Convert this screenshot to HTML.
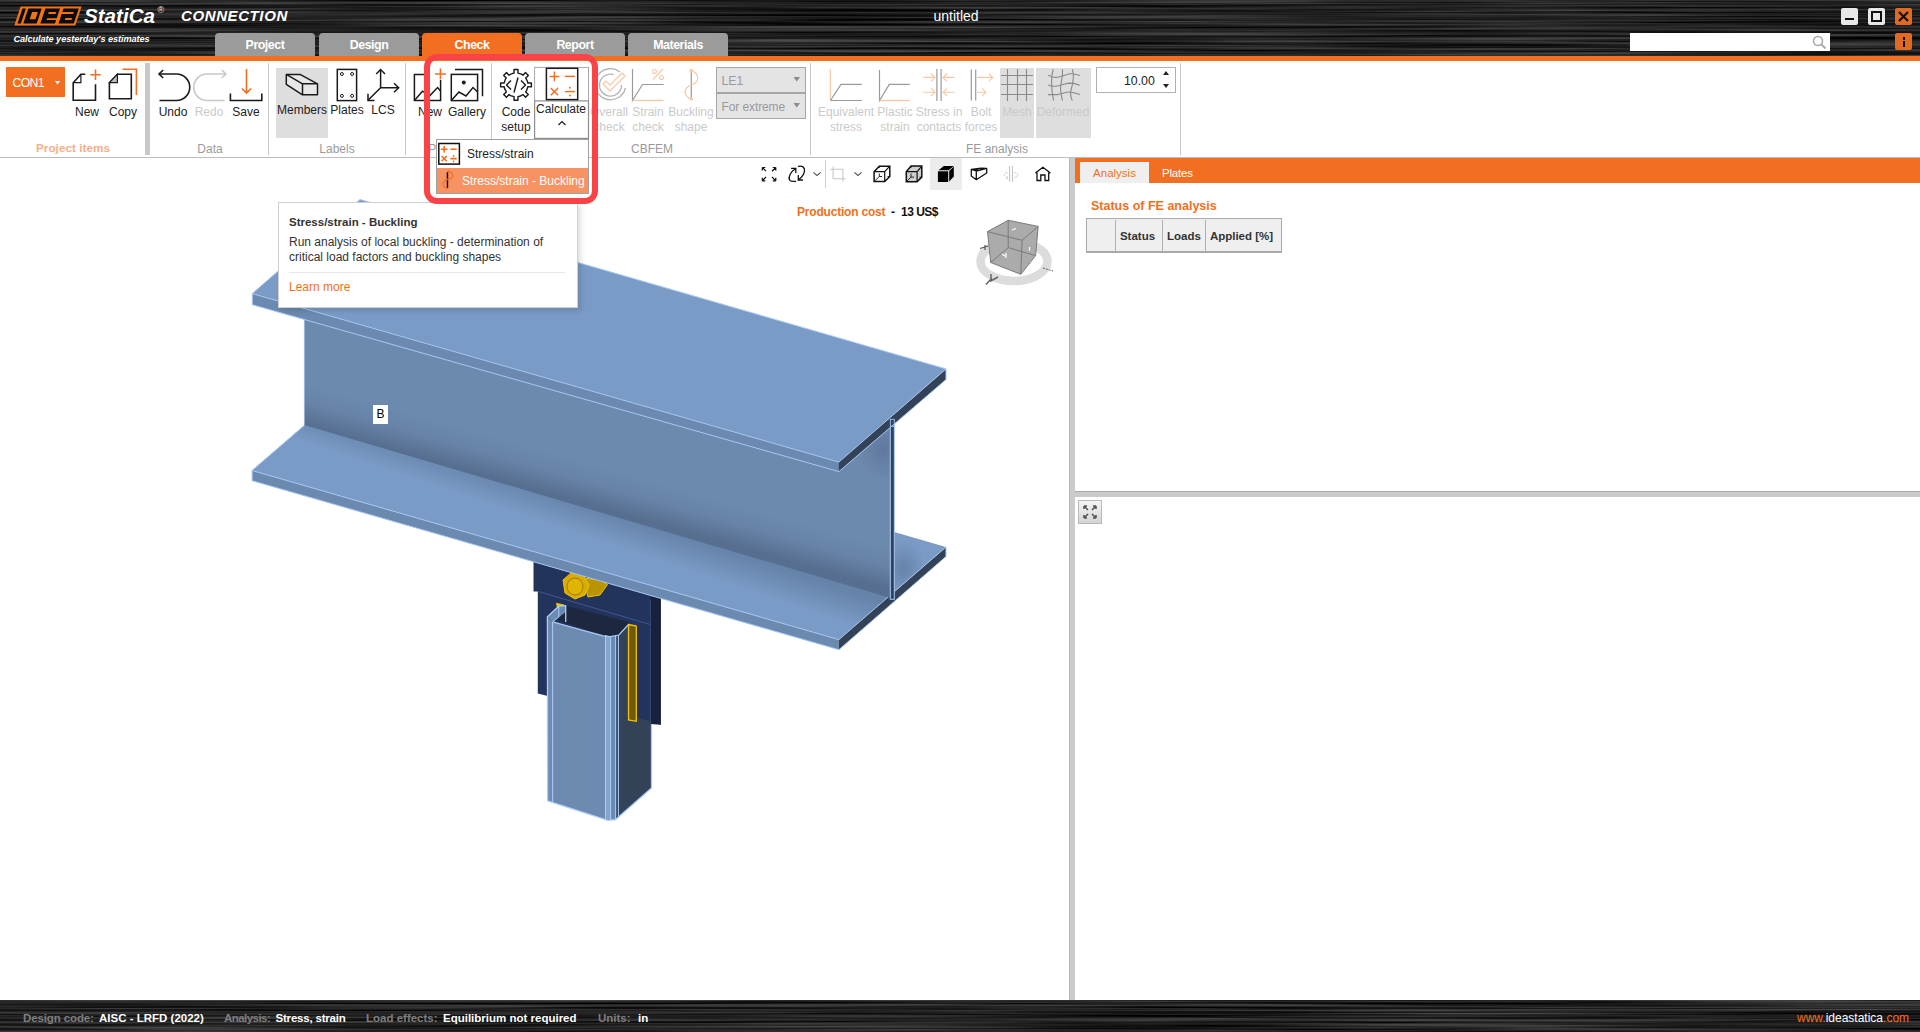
<!DOCTYPE html>
<html><head><meta charset="utf-8">
<style>
*{margin:0;padding:0;box-sizing:border-box}
html,body{width:1920px;height:1032px;overflow:hidden;background:#fff;font-family:"Liberation Sans",sans-serif;color:#222}
.a{position:absolute}
#hdr{left:0;top:0;width:1920px;height:56px;background:#222}
#obar{left:0;top:56px;width:1920px;height:5px;background:#f26f22}
#ribbon{left:0;top:61px;width:1920px;height:97px;background:#fff;border-bottom:1px solid #bdbdbd}
.tab{top:33px;height:23px;line-height:23px!important;padding-top:1px;width:100px;background:#9b9b9b;border-radius:4px 4px 0 0;color:#fff;font-weight:bold;font-size:12.4px;letter-spacing:-0.45px;text-align:center;line-height:23px}
.sep{width:1px;background:#c8c8c8}
.lbl{font-size:12px;color:#222;text-align:center;line-height:15px;white-space:nowrap}
.dis{color:#cacaca}
.grp{font-size:12px;color:#9a9a9a;text-align:center;top:141.5px;line-height:15px}
#footer{left:0;top:1000px;width:1920px;height:32px;background:#222}
.ft{top:1011px;font-size:12.5px;line-height:15px;white-space:nowrap}
.fb{font-size:11.5px!important;top:1011px!important}
</style></head><body>
<div id="hdr" class="a"></div>
<svg class="a" style="left:0;top:0" width="1920" height="56"><filter id="brush" x="0" y="0" width="100%" height="100%" color-interpolation-filters="sRGB"><feTurbulence type="fractalNoise" baseFrequency="0.003 0.42" numOctaves="3" seed="11"/><feColorMatrix type="matrix" values="0.45 0 0 0 -0.09  0.45 0 0 0 -0.09  0.45 0 0 0 -0.09  0 0 0 0 1"/></filter><rect width="1920" height="56" filter="url(#brush)"/></svg>
<div id="obar" class="a"></div>
<div id="ribbon" class="a"></div>
<div id="footer" class="a"></div>
<svg class="a" style="left:0;top:1000px" width="1920" height="32"><filter id="brush2" x="0" y="0" width="100%" height="100%" color-interpolation-filters="sRGB"><feTurbulence type="fractalNoise" baseFrequency="0.003 0.42" numOctaves="3" seed="5"/><feColorMatrix type="matrix" values="0.45 0 0 0 -0.09  0.45 0 0 0 -0.09  0.45 0 0 0 -0.09  0 0 0 0 1"/></filter><rect width="1920" height="32" filter="url(#brush2)"/></svg>


<!-- RIBBON CONTENT -->
<div class="a" style="left:145px;top:63px;width:5px;height:92px;background:#c8c8c8"></div>
<div class="a sep" style="left:268px;top:63px;height:92px"></div>
<div class="a sep" style="left:405px;top:63px;height:92px"></div>
<div class="a sep" style="left:491px;top:63px;height:92px"></div>
<div class="a sep" style="left:810px;top:63px;height:92px"></div>
<div class="a sep" style="left:1180px;top:63px;height:92px"></div>
<!-- highlights -->
<div class="a" style="left:276px;top:68px;width:52px;height:70px;background:#dedede"></div>
<div class="a" style="left:1000px;top:68px;width:34px;height:70px;background:#dedede"></div>
<div class="a" style="left:1036px;top:68px;width:55px;height:70px;background:#dedede"></div>
<!-- CON1 -->
<div class="a" style="left:6px;top:67px;width:59px;height:30px;background:#f26f22"></div><div class="a" style="left:12.5px;top:76px;color:#fff;font-size:12.2px;line-height:15px;letter-spacing:-0.6px">CON1</div>
<svg class="a" style="left:55px;top:81px" width="6" height="4"><polygon points="0,0 5,0 2.5,3.5" fill="#fff"/></svg>

<svg class="a" style="left:0;top:0" width="1200" height="160" viewBox="0 0 1200 160" fill="none" stroke-linecap="butt">
<g stroke="#1a1a1a" stroke-width="1.6">
 <!-- New doc -->
 <path d="M85.3,74.2 H80.9 L73.2,82.7 V100.2 H95.5 V84.2"/>
 <path d="M73.2,82.7 H80.9 V74.2" stroke-width="1.2"/>
 <!-- Copy doc -->
 <path d="M117.4,74.2 H131.3 V98.8 H109.4 V82.7 Z"/>
 <path d="M109.4,82.7 H117.4 V74.2 Z" fill="#bbb" stroke-width="1.2"/>
 <!-- Undo -->
 <path d="M159.5,74 H176.5 A13.25,13.25 0 0 1 176.5,100.5 H159.5"/>
 <path d="M163.2,70 L159,74 L163.2,78"/>
 <!-- Save tray -->
 <path d="M230.4,93.5 V100.5 H261.8 V93.5"/>
</g>
<g stroke="#f26f22" stroke-width="1.6">
 <path d="M95.5,69.5 V80 M90.2,74.7 H100.8"/>
 <path d="M122.5,69.3 H136.4 V95.1"/>
 <path d="M246.5,68.9 V93 M242,88.5 L246.5,93 L251,88.5"/>
</g>
<g stroke="#c8c8c8" stroke-width="1.6">
 <path d="M225.5,74 H207 A13.25,13.25 0 0 0 207,100.5 H224.5"/>
 <path d="M221.8,70 L226,74 L221.8,78"/>
</g>
<!-- Members box -->
<g stroke="#1a1a1a" stroke-width="1.5" stroke-linejoin="round">
 <path d="M286.3,74.4 L300,74.4 L317.5,83.8 L317.5,94.8 L302.5,94.8 L286.3,84.4 Z" fill="#e8e8e8"/>
 <path d="M286.3,74.4 L302.5,83.8 L317.5,83.8 M302.5,83.8 V94.8"/>
</g>
<!-- Plates -->
<g stroke="#1a1a1a" stroke-width="1.5">
 <rect x="337.3" y="69.4" width="19.3" height="31.2"/>
 <circle cx="341.9" cy="74" r="1.5" stroke-width="1"/><circle cx="352.1" cy="74" r="1.5" stroke-width="1"/>
 <circle cx="341.9" cy="95.9" r="1.5" stroke-width="1"/><circle cx="352.1" cy="95.9" r="1.5" stroke-width="1"/>
</g>
<!-- LCS -->
<g stroke="#1a1a1a" stroke-width="1.5">
 <path d="M380.6,70 V87.8 H398.5 M380.6,87.8 L368,100.3"/>
 <path d="M376.2,74 L380.6,69.5 L385,74"/>
 <path d="M394,83.3 L398.7,87.8 L394,92.3"/>
 <path d="M368,93.8 V100.4 H374.5"/>
</g>
<!-- New picture -->
<g stroke="#1a1a1a" stroke-width="1.5">
 <path d="M430,74.4 H414.4 V100.6 H440.6 V80"/>
 <path d="M414.4,100.6 L422.5,91.2 L430,95.6 L437.5,87.5 L440.6,91"/>
</g>
<path d="M440.4,68.5 V79.5 M435,74 H446" stroke="#f26f22" stroke-width="1.5"/>
<!-- Gallery -->
<g stroke="#1a1a1a" stroke-width="1.5">
 <path d="M455,69.4 H482.5 V96.3"/>
 <rect x="451.3" y="74.4" width="26.3" height="26.2"/>
 <path d="M451.3,100.6 L459,92 L466,96 L473,87.5 L477.6,92"/>
</g>
<circle cx="463.8" cy="82.5" r="2" fill="#1a1a1a"/>
<!-- Code setup gear -->
<g stroke="#1a1a1a" stroke-width="1.4" stroke-linejoin="round">
 <path d="M527.4,81.2 L527.8,83.0 L531.4,82.9 L531.4,86.9 L527.8,86.8 L526.7,90.4 L525.7,91.9 L528.3,94.4 L525.5,97.2 L523.0,94.6 L519.7,96.3 L517.9,96.7 L518.0,100.3 L514.0,100.3 L514.1,96.7 L510.5,95.6 L509.0,94.6 L506.5,97.2 L503.7,94.4 L506.3,91.9 L504.6,88.6 L504.2,86.8 L500.6,86.9 L500.6,82.9 L504.2,83.0 L505.3,79.4 L506.3,77.9 L503.7,75.4 L506.5,72.6 L509.0,75.2 L512.3,73.5 L514.1,73.1 L514.0,69.5 L518.0,69.5 L517.9,73.1 L521.5,74.2 L523.0,75.2 L525.5,72.6 L528.3,75.4 L525.7,77.9 Z"/>
 <path d="M511,80.5 L506.5,85 L511,89.5 M521,80.5 L525.5,85 L521,89.5 M518,77.5 L514,92.5"/>
</g>
<!-- Calculate -->
<rect x="534.6" y="67.4" width="53.9" height="71" stroke="#a8a8a8" stroke-width="1" fill="#fff"/>
<rect x="534.6" y="100.9" width="53.9" height="37.5" stroke="#8e8e8e" stroke-width="1.2" fill="#fff"/>
<rect x="546.4" y="68.3" width="31.3" height="31.3" stroke="#1a1a1a" stroke-width="1.5"/>
<g stroke="#f26f22" stroke-width="1.5">
 <path d="M554.4,71.5 V81.3 M549.5,76.4 H559.3"/>
 <path d="M565,76.4 H574.8"/>
 <path d="M550.8,88 L558,95.2 M558,88 L550.8,95.2"/>
 <path d="M565,91.6 H574.8"/>
</g>
<circle cx="569.9" cy="87.8" r="1" fill="#f26f22"/><circle cx="569.9" cy="95.4" r="1" fill="#f26f22"/>
<path d="M558.5,125 L562,121.5 L565.5,125" stroke="#1a1a1a" stroke-width="1.2"/>
<!-- Overall check -->
<g stroke="#b4b4b4" stroke-width="1.3">
 <path d="M620,72 A15.5,15.5 0 1 0 625.5,88"/>
 <path d="M613.5,74.5 A11,11 0 1 0 621.5,85"/>
</g>
<path d="M603,84 L610,91 L625,76 L622,73 L610,85 L606,81 Z" stroke="#f8c8a8" stroke-width="1.2" stroke-linejoin="round"/>
<!-- Strain check -->
<path d="M632.5,69 V100.5 L642.5,84.5 H663.6" stroke="#9a9a9a" stroke-width="1.2"/>
<path d="M632.5,100.5 H663.6" stroke="#f8c8a8" stroke-width="1.4"/>
<path d="M653,79.5 L663,69" stroke="#f8c8a8" stroke-width="1.2"/>
<circle cx="654.5" cy="71.5" r="2" stroke="#f8c8a8" stroke-width="1.1"/><circle cx="661.5" cy="77.5" r="2" stroke="#f8c8a8" stroke-width="1.1"/>
<!-- Buckling shape -->
<path d="M691.3,70.6 V99" stroke="#9a9a9a" stroke-width="1.2"/>
<path d="M691.3,70.6 C700,74 700,82 691.3,85 C683,88 683,96 691.3,99" stroke="#f8c8a8" stroke-width="1.2"/>
<circle cx="691.3" cy="70.6" r="1.8" fill="#f8c8a8"/><circle cx="691.3" cy="99" r="1.8" fill="#f8c8a8"/>
<!-- Equivalent stress -->
<path d="M830.4,69.3 V100.5" stroke="#f8c8a8" stroke-width="1.2"/>
<path d="M830.4,100.5 H861.8 M830.4,100.5 L841,84.4 H861.8" stroke="#9a9a9a" stroke-width="1.2"/>
<!-- Plastic strain -->
<path d="M879.5,69.9 V100.5 L889.3,84.4 H909.7" stroke="#9a9a9a" stroke-width="1.2"/>
<path d="M879.5,100.5 H909.7" stroke="#f8c8a8" stroke-width="1.4"/>
<!-- Stress in contacts -->
<path d="M936.9,69 V101 M941.1,69 V101" stroke="#9a9a9a" stroke-width="1.2"/>
<path d="M923.3,77.4 H935 M931,73.5 L935,77.4 L931,81.3 M923.3,92.2 H935 M931,88.3 L935,92.2 L931,96.1 M954.7,77.4 H943 M947,73.5 L943,77.4 L947,81.3 M954.7,92.2 H943 M947,88.3 L943,92.2 L947,96.1" stroke="#f8c8a8" stroke-width="1.1"/>
<!-- Bolt forces -->
<path d="M971.3,69.5 V100.5 M975.7,69.5 V100.5" stroke="#9a9a9a" stroke-width="1.2"/>
<path d="M977,77.4 H992.8 M988.8,73.5 L992.8,77.4 L988.8,81.3 M977,92.2 H986 M982,88.3 L986,92.2 L982,96.1" stroke="#f8c8a8" stroke-width="1.1"/>
<!-- Mesh -->
<path d="M1007.5,69 V101 M1017.5,69 V101 M1026.5,69 V101 M1001,75.5 H1033 M1001,84.5 H1033 M1001,94.5 H1033" stroke="#8a8a8a" stroke-width="1.1"/>
<!-- Deformed -->
<path d="M1053.3,69.3 C1051,76 1051,90 1053.6,100.5 M1062.4,69.3 C1063.5,76 1060,84 1060.6,90 C1061,95 1062,98 1062.4,100.5 M1072.3,69.3 C1074,74 1073.5,82 1071,90 C1070,95 1071,98 1072.3,100.5 M1048.1,75.3 C1051,77 1054,77.5 1057,77.3 C1062,76.8 1066,74 1070.5,73.7 C1074,73.6 1077,74.5 1079.9,75.5 M1048.1,84.9 C1051,86 1054,86.3 1056,86.2 C1062,85.5 1066,83.2 1069.5,83.1 C1074,83.2 1077,84.2 1079.9,85.2 M1048.1,94.6 H1057.5 C1062,93.8 1066,92 1069,92 C1073,92 1077,93.5 1079.9,94.6" stroke="#8a8a8a" stroke-width="1.1"/>
</svg>

<!-- combos -->
<div class="a" style="left:716px;top:67px;width:90px;height:26px;background:#e4e4e4;border:1px solid #a6a6a6"></div>
<div class="a" style="left:716px;top:93px;width:90px;height:26px;background:#e4e4e4;border:1px solid #a6a6a6"></div>
<div class="a" style="left:721.5px;top:73.5px;color:#9a9a9a;font-size:12.3px;line-height:15px">LE1</div>
<div class="a" style="left:721.5px;top:99.5px;color:#9a9a9a;font-size:12px;line-height:15px;letter-spacing:-0.1px">For extreme</div>
<svg class="a" style="left:793px;top:77px" width="8" height="5"><polygon points="0.5,0 7,0 3.75,4.5" fill="#8a8a8a"/></svg>
<svg class="a" style="left:793px;top:103px" width="8" height="5"><polygon points="0.5,0 7,0 3.75,4.5" fill="#8a8a8a"/></svg>
<!-- spin -->
<div class="a" style="left:1096px;top:67px;width:80px;height:26px;background:#fff;border:1px solid #b0b0b0"></div>
<div class="a" style="left:1124px;top:73.5px;color:#222;font-size:12.3px;line-height:15px">10.00</div>
<svg class="a" style="left:1163px;top:70px" width="8" height="20"><polygon points="0,5 6,5 3,1" fill="#222"/><polygon points="0,14 6,14 3,18" fill="#222"/></svg>

<!-- labels -->
<div class="a lbl" style="left:67px;top:104.5px;width:40px">New</div>
<div class="a lbl" style="left:103px;top:104.5px;width:40px">Copy</div>
<div class="a lbl" style="left:153px;top:104.5px;width:40px">Undo</div>
<div class="a lbl dis" style="left:189px;top:104.5px;width:40px">Redo</div>
<div class="a lbl" style="left:226px;top:104.5px;width:40px">Save</div>
<div class="a lbl" style="left:272px;top:102.5px;width:60px">Members</div>
<div class="a lbl" style="left:322px;top:102.5px;width:50px">Plates</div>
<div class="a lbl" style="left:363px;top:102.5px;width:40px">LCS</div>
<div class="a lbl" style="left:410px;top:104.5px;width:40px">New</div>
<div class="a lbl" style="left:442px;top:104.5px;width:50px">Gallery</div>
<div class="a lbl" style="left:491px;top:104.5px;width:50px">Code<br>setup</div>
<div class="a lbl" style="left:531px;top:101.5px;width:60px">Calculate</div>
<div class="a lbl dis" style="left:579px;top:104.5px;width:60px">Overall<br>check</div>
<div class="a lbl dis" style="left:623px;top:104.5px;width:50px">Strain<br>check</div>
<div class="a lbl dis" style="left:661px;top:104.5px;width:60px">Buckling<br>shape</div>
<div class="a lbl dis" style="left:816px;top:104.5px;width:60px">Equivalent<br>stress</div>
<div class="a lbl dis" style="left:870px;top:104.5px;width:50px">Plastic<br>strain</div>
<div class="a lbl dis" style="left:909px;top:104.5px;width:60px">Stress in<br>contacts</div>
<div class="a lbl dis" style="left:956px;top:104.5px;width:50px">Bolt<br>forces</div>
<div class="a lbl dis" style="left:992px;top:104.5px;width:50px">Mesh</div>
<div class="a lbl dis" style="left:1033px;top:104.5px;width:60px">Deformed</div>
<!-- group labels -->
<div class="a grp" style="left:23px;width:100px;color:#f5ae88;font-weight:bold;font-size:11.8px;top:140.5px">Project items</div>
<div class="a grp" style="left:180px;width:60px">Data</div>
<div class="a grp" style="left:307px;width:60px">Labels</div>
<div class="a grp" style="left:410px;width:80px">Pictures</div>
<div class="a grp" style="left:612px;width:80px">CBFEM</div>
<div class="a grp" style="left:947px;width:100px">FE analysis</div>


<!-- LOGO -->
<svg class="a" style="left:10px;top:3px" width="80" height="26" viewBox="10 3 80 26">
 <path d="M20.60,6.50 H81.60 L75.33,25.50 H14.33 Z" fill="#f27314"/>
 <path d="M22.50,8.40 H25.90 L20.88,23.60 H17.48 Z M28.30,8.40 H41.70 L36.68,23.60 H23.28 Z M32.10,12.00 H37.90 L35.51,19.25 H29.71 Z M45.40,8.40 H60.00 L54.98,23.60 H40.38 Z M63.50,8.40 H78.80 L73.78,23.60 H58.48 Z" fill="#0a0a0a" fill-rule="evenodd"/>
 <path d="M48.75,12.00 H56.25 L55.62,13.90 H48.12 Z M47.10,18.30 H60.50 L59.94,20.00 H46.54 Z M62.00,12.00 H73.75 L73.12,13.90 H61.37 Z M65.40,18.10 H72.10 L71.47,20.00 H64.77 Z" fill="#f27314"/>
</svg>
<div class="a" style="left:84px;top:4px;color:#fff;font-size:20.6px;font-weight:bold;font-style:italic;line-height:24px;letter-spacing:0px">StatiCa</div>
<div class="a" style="left:157.5px;top:5px;color:#eee;font-size:9px;line-height:10px">&#174;</div>
<div class="a" style="left:181px;top:6px;color:#fff;font-size:15px;font-weight:bold;font-style:italic;line-height:20px;letter-spacing:0.6px">CONNECTION</div>
<div class="a" style="left:13.5px;top:33px;color:#fff;font-size:9.2px;font-weight:bold;font-style:italic;line-height:12px;letter-spacing:-0.08px;white-space:nowrap">Calculate yesterday's estimates</div>

<!-- window controls -->
<div class="a" style="left:1841px;top:8px;width:17px;height:17px;background:#e8e8e8;border-radius:2px"></div>
<div class="a" style="left:1845px;top:18px;width:9px;height:2px;background:#111"></div>
<div class="a" style="left:1868px;top:8px;width:17px;height:17px;background:#e8e8e8;border-radius:2px"></div>
<div class="a" style="left:1871px;top:11px;width:11px;height:11px;border:2px solid #111"></div>
<div class="a" style="left:1895px;top:8px;width:17px;height:17px;background:#e06a22;border-radius:2px"></div>
<svg class="a" style="left:1895px;top:8px" width="17" height="17"><path d="M4,4 L13,13 M13,4 L4,13" stroke="#111" stroke-width="2.2"/></svg>
<div class="a" style="left:1895px;top:33px;width:17px;height:17px;background:#e06a22;border-radius:2px"></div>
<div class="a" style="left:1902.5px;top:37px;width:2.5px;height:2.5px;background:#111"></div>
<div class="a" style="left:1902.5px;top:41px;width:2.5px;height:6px;background:#111"></div>
<!-- search -->
<div class="a" style="left:1630px;top:33px;width:200px;height:18px;background:#fff"></div>
<svg class="a" style="left:1810px;top:33px" width="20" height="18"><circle cx="8" cy="8" r="4.5" fill="none" stroke="#aaa" stroke-width="1.6"/><path d="M11.5,11.5 L15.5,15.5" stroke="#aaa" stroke-width="2"/></svg>

<!-- FOOTER TEXT -->
<div class="a ft fb" style="left:23px;color:#7e7e7e;font-weight:bold;letter-spacing:-0.12px">Design code:</div>
<div class="a ft fb" style="left:99px;color:#fff;font-weight:bold">AISC - LRFD (2022)</div>
<div class="a ft fb" style="left:224px;color:#7e7e7e;font-weight:bold;letter-spacing:-0.55px">Analysis:</div>
<div class="a ft fb" style="left:275.5px;color:#fff;font-weight:bold;letter-spacing:-0.2px">Stress, strain</div>
<div class="a ft fb" style="left:366px;color:#7e7e7e;font-weight:bold">Load effects:</div>
<div class="a ft fb" style="left:443px;color:#fff;font-weight:bold">Equilibrium not required</div>
<div class="a ft fb" style="left:598px;color:#7e7e7e;font-weight:bold">Units:</div>
<div class="a ft fb" style="left:638px;color:#fff;font-weight:bold">in</div>
<div class="a ft" style="left:1797px;color:#fff;font-size:12px"><span style="color:#f26f22">www.</span>ideastatica<span style="color:#f26f22">.com</span></div>

<!-- RIGHT PANEL -->
<div class="a" style="left:1091px;top:199px;color:#f26f22;font-size:12.5px;font-weight:bold;line-height:15px">Status of FE analysis</div>
<div class="a" style="left:1086px;top:218px;width:196px;height:35px;background:#efefef;border:solid #a9a9a9;border-width:1.5px 1.5px 2.5px 1.5px"></div>
<div class="a" style="left:1115px;top:220px;width:1px;height:31px;background:#b0b0b0"></div>
<div class="a" style="left:1162px;top:220px;width:1px;height:31px;background:#b0b0b0"></div>
<div class="a" style="left:1205px;top:220px;width:1px;height:31px;background:#b0b0b0"></div>
<div class="a" style="left:1114.5px;top:229px;width:46px;text-align:center;font-size:11.5px;font-weight:bold;color:#333;line-height:15px">Status</div>
<div class="a" style="left:1163px;top:229px;width:42px;text-align:center;font-size:11.5px;font-weight:bold;color:#333;line-height:15px">Loads</div>
<div class="a" style="left:1204.5px;top:229px;width:74px;text-align:center;font-size:11.5px;font-weight:bold;color:#333;line-height:15px">Applied [%]</div>
<!-- expand button -->
<div class="a" style="left:1078px;top:500px;width:24px;height:24px;border:1px solid #b8b8b8;background:linear-gradient(#f4f4f4,#d4d4d4)"></div>
<svg class="a" style="left:1078px;top:500px" width="24" height="24"><g stroke="#555" stroke-width="1.6" fill="none"><path d="M6,6 L10,10 M6,6 H9 M6,6 V9"/><path d="M18,6 L14,10 M18,6 H15 M18,6 V9"/><path d="M6,18 L10,14 M6,18 H9 M6,18 V15"/><path d="M18,18 L14,14 M18,18 H15 M18,18 V15"/></g></svg>

<!-- VIEWPORT TOOLBAR -->
<div class="a" style="left:930px;top:158px;width:32px;height:32px;background:#ececec"></div>
<div class="a" style="left:825px;top:160px;width:1px;height:28px;background:#d0d0d0"></div>
<svg class="a" style="left:750px;top:158px" width="320" height="34" viewBox="750 158 320 34" fill="none">
 <g stroke="#111" stroke-width="1.2">
  <path d="M762.3,167.5 L766,171.2 M762.3,167.5 H765.3 M762.3,167.5 V170.5"/>
  <path d="M775.8,167.5 L772,171.2 M775.8,167.5 H772.8 M775.8,167.5 V170.5"/>
  <path d="M762.3,180.8 L766,177 M762.3,180.8 H765.3 M762.3,180.8 V177.8"/>
  <path d="M775.8,180.8 L772,177 M775.8,180.8 H772.8 M775.8,180.8 V177.8"/>
 </g>
 <g stroke="#111" stroke-width="1.3" stroke-linecap="round">
  <path d="M795.6,168.5 C790.5,172 788,177 789.5,180 C790.5,182 793,181.5 795.6,181.3"/>
  <path d="M791.5,168.3 H795.8 V172.5"/>
  <path d="M798.5,166.3 C802,165.5 805,167 804.5,171 C804,174.5 801,178 798.5,179.8"/>
  <path d="M798.3,175.5 V180 H802.5"/>
 </g>
 <path d="M813.3,172.3 L817,175.5 L820.7,172.3" stroke="#555" stroke-width="1.1"/>
 <path d="M830.4,169.3 H842.9 V181.4 M833.1,166.6 V178.7 H845.6" stroke="#c8c8c8" stroke-width="1.1"/>
 <path d="M854.3,172.3 L858,175.5 L861.7,172.3" stroke="#555" stroke-width="1.1"/>
 <!-- wire cube -->
 <g stroke="#111" stroke-linejoin="miter">
  <path d="M874.1,171.7 L879.3,166.2 H889.8 V176.5 L884.7,181.6 H874.1 Z" stroke-width="1.5"/>
  <path d="M874.1,171.7 H884.7 V181.6 M884.7,171.7 L889.8,166.2" stroke-width="1.2"/>
  <path d="M874.5,181.2 L879.3,176.5 M879.3,176.5 V173.5 M879.3,176.5 H882 M889.8,176.5 H887.5 M879.3,166.2 V168" stroke-width="0.9"/>
 </g>
 <!-- shaded wire cube -->
 <g stroke="#111" stroke-linejoin="miter">
  <path d="M906.3,171.7 L911,166.1 H921.8 V177.1 L917.1,181.8 H906.3 Z" fill="#cfcfcf" stroke-width="1.5"/>
  <path d="M906.3,171.7 H917.1 V181.8 M917.1,171.7 L921.8,166.1" stroke-width="1.2"/>
  <path d="M906.6,181.4 L911,177.1 M911,177.1 V173.5 M911,177.1 H914 M921.8,177.1 H919.5 M911,166.1 V168" stroke-width="0.9"/>
 </g>
 <!-- solid cube -->
 <path d="M937.9,171.3 H948.2 V182 H937.9 Z" fill="#000"/>
 <path d="M938.5,170.3 L943.8,166.1 H953.8 L948.6,170.3 Z" fill="#000"/>
 <path d="M949.2,171 L953.8,166.6 V176.5 L949.2,181.5 Z" fill="#000"/>
 <!-- plate/beam -->
 <path d="M971.3,169.3 L981,168.2 L986.7,168.4 V173 L976.3,179.7 L971.3,175.9 Z M971.3,169.3 L976.3,171 L986.7,168.4 M976.3,171 V179.7 M974.5,169.5 L979,170.2 L984.5,168.8" stroke="#111" stroke-width="1.3" stroke-linejoin="round"/>
 <!-- disabled rotate -->
 <path d="M1009.6,166 V181.8 M1012.5,166 V181.8" stroke="#c4c4c4" stroke-width="1.1"/>
 <path d="M1007.5,172.5 C1004,173.5 1003,175.5 1005,176.5 M1014.5,172.5 C1018,173 1019,175.5 1016.5,177 C1015.5,177.5 1014.5,177.5 1014,177.5" stroke="#c4c4c4" stroke-width="1" stroke-dasharray="2,1"/>
 <path d="M1008,176.5 L1006,177.8 L1008,179" stroke="#c4c4c4" stroke-width="1"/>
 <!-- home -->
 <path d="M1035.4,173 L1042.9,167.2 L1050.4,173 M1037,171.8 V180.5 H1040.8 V175 H1045 V180.5 H1048.7 V171.8" stroke="#111" stroke-width="1.3" stroke-linejoin="miter"/>
</svg>
<div class="a" style="left:797px;top:205px;font-size:12px;line-height:15px;font-weight:bold;white-space:nowrap;color:#f26f22;letter-spacing:-0.2px">Production cost</div><div class="a" style="left:891px;top:205px;font-size:12px;line-height:15px;font-weight:bold;color:#111">-</div><div class="a" style="left:901px;top:205px;font-size:12px;line-height:15px;font-weight:bold;white-space:nowrap;color:#111;letter-spacing:-0.5px">13 US$</div>
<!-- nav cube -->
<svg class="a" style="left:965px;top:205px" width="100" height="90" viewBox="965 205 100 90">
 <ellipse cx="1014" cy="261.5" rx="33.5" ry="19.5" fill="none" stroke="#dcdcdc" stroke-width="8.5"/>
 <polygon points="987.5,231.6 1008.2,220.3 1038.2,226.4 1035.6,255.6 1020.8,274.3 990.7,262.5" fill="#ababab" stroke="#7a7a7a" stroke-width="1"/>
 <path d="M987.5,231.6 L1022.1,240.3 L1038.2,226.4 M1022.1,240.3 L1020.8,274.3 M1008.2,220.3 V247.7 L990.7,262.5 M1008.6,247.7 L1035.6,255.6" stroke="#7a7a7a" stroke-width="1" fill="none"/>
 <path d="M1012,230 L1016,228.5 M1029.5,247 V250.5 M1002,254 L1005,256 M1006,253 V258" stroke="#fff" stroke-width="1.2"/>
 <path d="M980,248.5 L988,246 M985,245 V250" stroke="#555" stroke-width="1.2"/>
 <path d="M986,284.5 L992,278 M991,274 V281 L998,277" stroke="#666" stroke-width="1.5" fill="none"/>
 <path d="M1043,268 L1053,271" stroke="#666" stroke-width="1" stroke-dasharray="2,1"/>
</svg>

<!-- tabs -->
<div class="a tab" style="left:215px">Project</div>
<div class="a tab" style="left:319px">Design</div>
<div class="a tab" style="left:422px;background:#f26f22">Check</div>
<div class="a tab" style="left:525px">Report</div>
<div class="a tab" style="left:628px">Materials</div>

<!-- title -->
<div class="a" style="left:900px;top:8px;width:112px;text-align:center;color:#fff;font-size:14px;line-height:17px">untitled</div>

<!-- splitters -->
<div class="a" style="left:1069px;top:158px;width:6px;height:842px;background:#cbcbcb;border-left:1px solid #b8b8b8"></div>
<div class="a" style="left:1075px;top:491px;width:845px;height:6px;background:#cbcbcb;border-top:1px solid #a9a9a9"></div>

<!-- right panel tab bar -->
<div class="a" style="left:1075px;top:158px;width:845px;height:25px;background:#f26f22"></div>
<div class="a" style="left:1080px;top:162px;width:69px;height:21px;background:#efefef;color:#f26f22;font-size:11.5px;line-height:22px;text-align:center">Analysis</div>
<div class="a" style="left:1162px;top:162px;color:#fff;font-size:11.5px;line-height:22px;letter-spacing:-0.2px">Plates</div>


<!-- 3D model -->
<svg class="a" style="left:0;top:0" width="1920" height="1032" viewBox="0 0 1920 1032">
<defs>
<linearGradient id="webg" gradientUnits="userSpaceOnUse" x1="600" y1="508" x2="611" y2="469">
<stop offset="0" stop-color="#566f90"/><stop offset="0.55" stop-color="#6783a8"/><stop offset="1" stop-color="#6c89ae"/></linearGradient>
<radialGradient id="shd1"><stop offset="0" stop-color="#4f6686" stop-opacity="0.45"/><stop offset="1" stop-color="#4f6686" stop-opacity="0"/></radialGradient>
<linearGradient id="bfg" gradientUnits="userSpaceOnUse" x1="600" y1="508" x2="590" y2="538">
<stop offset="0" stop-color="#6683a9"/><stop offset="1" stop-color="#7a9bc6"/></linearGradient>
<linearGradient id="colside" x1="0" y1="0" x2="0" y2="1"><stop offset="0" stop-color="#2e3a4e"/><stop offset="1" stop-color="#36455b"/></linearGradient>
</defs>
<!-- column assembly -->
<polygon points="533.5,550 533.5,591.4 537.8,591.4 537.8,693.4 660.8,724.7 660.8,585" fill="#22335c"/>
<polygon points="650.3,597 660.8,597 660.8,724.7 650.3,724" fill="#17223c"/>
<line x1="537.8" y1="591.4" x2="650.3" y2="624.5" stroke="#3d5790" stroke-width="1"/>
<line x1="650.3" y1="600" x2="650.3" y2="724" stroke="#3d5790" stroke-width="0.8"/>
<!-- bolt -->
<polygon points="583,578 600,580 607.6,584.4 600,595 588,597" fill="#b89400" stroke="#f2c200" stroke-width="1"/>
<polygon points="563,580 571,573 583,575 589,585 585,595 575,599 565,593" fill="#d9ab00" stroke="#f2c200" stroke-width="1"/>
<ellipse cx="575" cy="586.5" rx="8" ry="8.5" fill="#e0b400" stroke="#8c6e00" stroke-width="0.8"/>
<!-- column interior -->
<polygon points="547.4,616.7 558.8,606.2 565.7,605.7 628.5,622 628.5,624.5 618.9,635 607.6,636.7" fill="#1d2840"/>
<polygon points="556,602.7 564,604.5 564,608 557,608" fill="#f2c200"/>
<!-- column side face -->
<polygon points="612,636.5 618.9,635 628.5,624.5 636.3,624.5 636.3,717.5 651.5,721.5 651.5,788 615.6,819.6" fill="#334256"/>
<!-- column front face -->
<polygon points="547.4,616.7 552.7,621.9 610.2,636.7 618.5,635.2 618.5,816 615.6,819.6 608,820.3 547.6,800.8" fill="#6d8ab0"/>
<polygon points="547.4,616.7 558.8,606.2 565.7,605.7 565.7,612 552.7,621.9" fill="#6d8ab0"/>
<polygon points="605.5,635 610.6,636.6 610.6,820 605.5,818.6" fill="#86a6d0"/>
<polygon points="615.6,636 618.5,635.2 618.5,816 615.6,819.6" fill="#41536e"/>
<g stroke="#a9cdf7" fill="none">
<polyline points="547.6,800.8 547.4,616.7 558.8,606.2 565.7,605.7 565.7,621.9" stroke-width="1.3"/>
<polyline points="552.6,802.5 552.6,621.9 558.8,617 558.8,607" stroke-width="1"/>
<polyline points="552.7,621.9 603,636 610.2,636.7 618.9,635 628.5,624.5" stroke-width="1.2"/>
<line x1="605.5" y1="635" x2="605.5" y2="818.6" stroke-width="1"/>
<line x1="610.6" y1="636.6" x2="610.6" y2="820" stroke-width="1"/>
<line x1="615.6" y1="636" x2="615.6" y2="819.6" stroke-width="1"/>
<line x1="618.5" y1="635.2" x2="618.5" y2="816" stroke-width="0.9"/>
<polyline points="547.6,800.8 608,820.3 615.6,819.6 651.5,788 651.5,724" stroke-width="1.3"/>
</g>
<!-- yellow stiffener -->
<polygon points="628.5,624.5 636.3,626 636.3,721.3 628.5,720" fill="#6e5a08" stroke="#f2c200" stroke-width="1.3"/>
<!-- bottom flange -->
<polygon points="252.1,470.5 838.9,639.6 946,547 360,377.5" fill="#7a9bc6"/>
<polygon points="306,423.8 892.5,593.3 903,584 316,414" fill="#5e7a9f" opacity="0"/>
<polygon points="306,423.8 892.5,593.3 838.9,639.6 252.1,470.5" fill="url(#bfg)"/>
<clipPath id="bfclip"><polygon points="892.5,420 946,547 892.5,593.3"/></clipPath>
<ellipse cx="903" cy="568" rx="22" ry="28" fill="url(#shd1)" clip-path="url(#bfclip)"/>
<polygon points="252.1,470.5 838.9,639.6 838.9,649.7 252.1,480.7" fill="#6c89b0"/>
<polygon points="838.9,639.6 946,547 946,556.5 838.9,649.7" fill="#334256"/>
<polyline points="252.1,480.7 252.1,470.5 838.9,639.6 946,547" fill="none" stroke="#a6c8f5" stroke-width="1"/>
<polyline points="252.1,480.7 838.9,649.7 946,556.5 946,547" fill="none" stroke="#a6c8f5" stroke-width="1"/>
<polyline points="252.1,470.5 304.3,425.5" fill="none" stroke="#a6c8f5" stroke-width="1"/>
<!-- web -->
<polygon points="304.3,255 890.5,425 890.5,598 304.3,425" fill="url(#webg)"/>
<clipPath id="webclip"><polygon points="304.3,255 890.5,425 890.5,598 304.3,425"/></clipPath>
<ellipse cx="884" cy="450" rx="26" ry="30" fill="url(#shd1)" clip-path="url(#webclip)"/>
<!-- web end strip -->
<rect x="890.3" y="419.3" width="4" height="180" fill="#334256" stroke="#a6c8f5" stroke-width="1"/>
<line x1="304.3" y1="319" x2="304.3" y2="425" stroke="#a6c8f5" stroke-width="0.8" opacity="0.6"/>
<!-- top flange -->
<polygon points="252.3,293.6 838.9,462.1 946,368.9 360,199.5" fill="#7a9bc6"/>
<polygon points="252.3,293.6 838.9,462.1 838.9,471.6 252.3,304.7" fill="#6c89b0"/>
<polygon points="838.9,462.1 946,368.9 946,379.6 838.9,471.6" fill="#334256"/>
<polyline points="252.3,304.7 252.3,293.6 838.9,462.1 946,368.9" fill="none" stroke="#a6c8f5" stroke-width="1"/>
<polyline points="252.3,304.7 838.9,471.6 946,379.6 946,368.9" fill="none" stroke="#a6c8f5" stroke-width="1"/>
<polyline points="252.3,293.6 360,199.5 946,368.9" fill="none" stroke="#a6c8f5" stroke-width="1"/>
<rect x="890.3" y="419.3" width="4" height="7" fill="none" stroke="#a6c8f5" stroke-width="0.9"/>
</svg>
<div class="a" style="left:373px;top:405px;width:15px;height:19px;background:#fff;color:#000;font-size:12px;line-height:19px;text-align:center">B</div>


<!-- TOOLTIP -->
<div class="a" style="left:278px;top:202px;width:300px;height:106px;background:#fff;border:1px solid #cfcfcf;box-shadow:3px 3px 5px rgba(0,0,0,0.12)"></div>
<div class="a" style="left:289px;top:215px;font-size:11.5px;font-weight:bold;color:#333;line-height:15px;white-space:nowrap">Stress/strain - Buckling</div>
<div class="a" style="left:289px;top:235px;font-size:12px;color:#333;line-height:15px;white-space:nowrap">Run analysis of local buckling - determination of<br>critical load factors and buckling shapes</div>
<div class="a" style="left:289px;top:272px;width:276px;height:1px;background:#e8e8e8"></div>
<div class="a" style="left:289px;top:280px;font-size:12px;color:#f26f22;line-height:15px;white-space:nowrap">Learn more</div>
<!-- DROPDOWN -->
<div class="a" style="left:436px;top:139px;width:153px;height:55px;background:#fff;border:1px solid #a0a0a0"></div>
<div class="a" style="left:437px;top:168px;width:151px;height:25px;background:#f79262"></div>
<svg class="a" style="left:436px;top:139px" width="153" height="55" viewBox="436 139 153 55" fill="none">
 <rect x="438.8" y="143.5" width="20.6" height="20.6" stroke="#111" stroke-width="1.5"/>
 <g stroke="#f26f22" stroke-width="1.6">
  <path d="M444.2,146 V152.6 M440.9,149.3 H447.5 M450.4,149.3 H456.8 M441.6,156 L446.8,161.2 M446.8,156 L441.6,161.2 M450.4,158.6 H456.8"/>
 </g>
 <circle cx="453.6" cy="155.9" r="0.9" fill="#f26f22"/><circle cx="453.6" cy="161.4" r="0.9" fill="#f26f22"/>
 <path d="M447.45,172.2 V187.9" stroke="#111" stroke-width="1.5"/>
 <path d="M447.45,170.6 C452,172 453.5,175 452.5,177 C451.5,178.5 449,179 447.45,179.4 C444.5,180.5 442.5,183 443.2,185 C444,187 446,188.5 447.45,189" stroke="#f26f22" stroke-width="1.2"/>
</svg>
<div class="a" style="left:467px;top:147px;font-size:12px;color:#222;line-height:15px;white-space:nowrap">Stress/strain</div>
<div class="a" style="left:462px;top:174px;font-size:12px;color:#fff;line-height:15px;white-space:nowrap">Stress/strain - Buckling</div>
<!-- RED HIGHLIGHT -->
<div class="a" style="left:424px;top:54px;width:174px;height:150px;border:6px solid #fa4347;border-radius:13px"></div>

</body></html>
